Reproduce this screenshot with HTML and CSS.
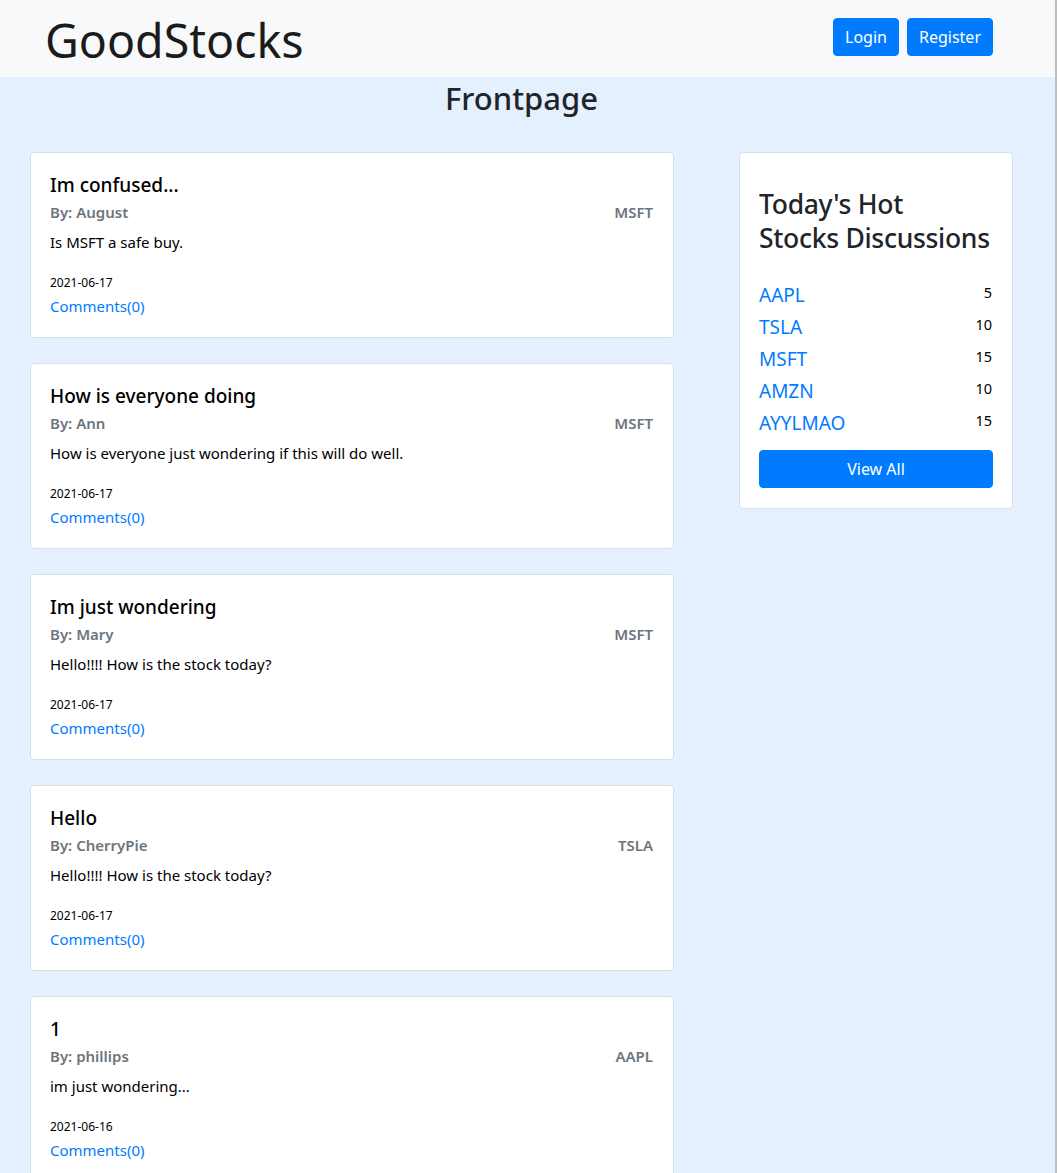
FILE: index.html
```html
<!DOCTYPE html>
<html lang="en">
<head>
<meta charset="utf-8">
<title>GoodStocks</title>
<link rel="stylesheet" href="styles.css">
</head>
<body>
<div class="page">
  <nav class="navbar">
    <a class="brand" href="#">GoodStocks</a>
    <div class="nav-actions">
      <a class="btn" href="#">Login</a>
      <a class="btn" href="#">Register</a>
    </div>
  </nav>
  <main class="container">
    <h2 class="page-title">Frontpage</h2>
    <div class="columns">
      <section class="posts">
        <article class="card post">
          <h5 class="post-title">Im confused...</h5>
          <div class="post-meta"><span>By: August</span><span>MSFT</span></div>
          <p class="post-body">Is MSFT a safe buy.</p>
          <div class="post-date">2021-06-17</div>
          <a class="post-link" href="#">Comments(0)</a>
        </article>
        <article class="card post">
          <h5 class="post-title">How is everyone doing</h5>
          <div class="post-meta"><span>By: Ann</span><span>MSFT</span></div>
          <p class="post-body">How is everyone just wondering if this will do well.</p>
          <div class="post-date">2021-06-17</div>
          <a class="post-link" href="#">Comments(0)</a>
        </article>
        <article class="card post">
          <h5 class="post-title">Im just wondering</h5>
          <div class="post-meta"><span>By: Mary</span><span>MSFT</span></div>
          <p class="post-body">Hello!!!! How is the stock today?</p>
          <div class="post-date">2021-06-17</div>
          <a class="post-link" href="#">Comments(0)</a>
        </article>
        <article class="card post">
          <h5 class="post-title">Hello</h5>
          <div class="post-meta"><span>By: CherryPie</span><span>TSLA</span></div>
          <p class="post-body">Hello!!!! How is the stock today?</p>
          <div class="post-date">2021-06-17</div>
          <a class="post-link" href="#">Comments(0)</a>
        </article>
        <article class="card post">
          <h5 class="post-title">1</h5>
          <div class="post-meta"><span>By: phillips</span><span>AAPL</span></div>
          <p class="post-body">im just wondering...</p>
          <div class="post-date">2021-06-16</div>
          <a class="post-link" href="#">Comments(0)</a>
        </article>
      </section>
      <aside class="card hot">
        <h3 class="hot-title">Today's Hot<br>Stocks Discussions</h3>
        <ul class="hot-list">
          <li class="hot-item"><a href="#">AAPL</a><span class="hot-count">5</span></li>
          <li class="hot-item"><a href="#">TSLA</a><span class="hot-count">10</span></li>
          <li class="hot-item"><a href="#">MSFT</a><span class="hot-count">15</span></li>
          <li class="hot-item"><a href="#">AMZN</a><span class="hot-count">10</span></li>
          <li class="hot-item"><a href="#">AYYLMAO</a><span class="hot-count">15</span></li>
        </ul>
        <a class="btn btn-block" href="#">View All</a>
      </aside>
    </div>
  </main>
</div>
</body>
</html>
```
FILE: styles.css
```css
html { background: #ffffff; }
body {
  margin: 0;
  font-family: "Noto Sans", "Open Sans", sans-serif;
  color: #212529;
  font-size: 16px;
  line-height: 1.5;
}
a { text-decoration: none; color: #007bff; }

.page {
  width: 1055px;
  min-height: 1173px;
  background: #e4f0fe;
  border-right: 2px solid #bdbdbd;
}

.navbar {
  height: 77px;
  background: #f8f9fa;
  display: flex;
  align-items: center;
  justify-content: space-between;
  padding: 0 62px 0 45px;
}
.brand {
  color: #1b1b1b;
  font-size: 46.5px;
  line-height: 58px;
  margin-top: 2px;
}
.nav-actions {
  display: flex;
  gap: 8px;
  margin-top: -3px;
}
.btn {
  display: inline-block;
  background: #007bff;
  border: 1px solid #007bff;
  color: #fff;
  font-size: 16px;
  line-height: 24px;
  padding: 6px 11px;
  border-radius: 4px;
  text-align: center;
}

.container {
  width: 983px;
  margin-left: 30px;
}
.page-title {
  margin: 2px 0 35px;
  text-align: center;
  font-size: 31px;
  line-height: 38px;
  font-weight: 500;
}
.columns {
  display: flex;
  align-items: flex-start;
  gap: 65px;
}
.posts {
  width: 644px;
  display: flex;
  flex-direction: column;
  gap: 25px;
}
.card {
  background: #fff;
  border: 1px solid #dadde1;
  border-radius: 4px;
  box-sizing: border-box;
}
.post {
  height: 186px;
  padding: 20px 20px 0 19px;
}
.post-title {
  margin: 0;
  font-size: 19px;
  line-height: 24px;
  font-weight: 500;
  color: #000;
}
.post-meta {
  margin-top: 3px;
  display: flex;
  justify-content: space-between;
  color: #6c757d;
  font-weight: 600;
  font-size: 15px;
  line-height: 24px;
}
.post-body {
  margin: 6px 0 0;
  font-size: 15px;
  line-height: 24px;
  color: #000;
}
.post-date {
  margin-top: 19px;
  font-size: 12px;
  line-height: 20px;
  color: #000;
}
.post-link {
  display: block;
  margin-top: 1px;
  font-size: 15px;
  line-height: 24px;
}

.hot {
  width: 274px;
  padding: 34px 19px 20px;
}
.hot-title {
  margin: 0;
  font-size: 26.5px;
  letter-spacing: -0.3px;
  line-height: 34px;
  font-weight: 500;
  white-space: nowrap;
}
.hot-list {
  list-style: none;
  margin: 24px 0 0;
  padding: 0;
}
.hot-item {
  display: flex;
  justify-content: space-between;
  align-items: flex-start;
  height: 32px;
}
.hot-item a {
  font-size: 19px;
  line-height: 32px;
}
.hot-count {
  font-size: 14.5px;
  line-height: 26px;
  color: #000;
  padding-right: 1px;
}
.btn-block {
  display: block;
  margin-top: 11px;
}
```
